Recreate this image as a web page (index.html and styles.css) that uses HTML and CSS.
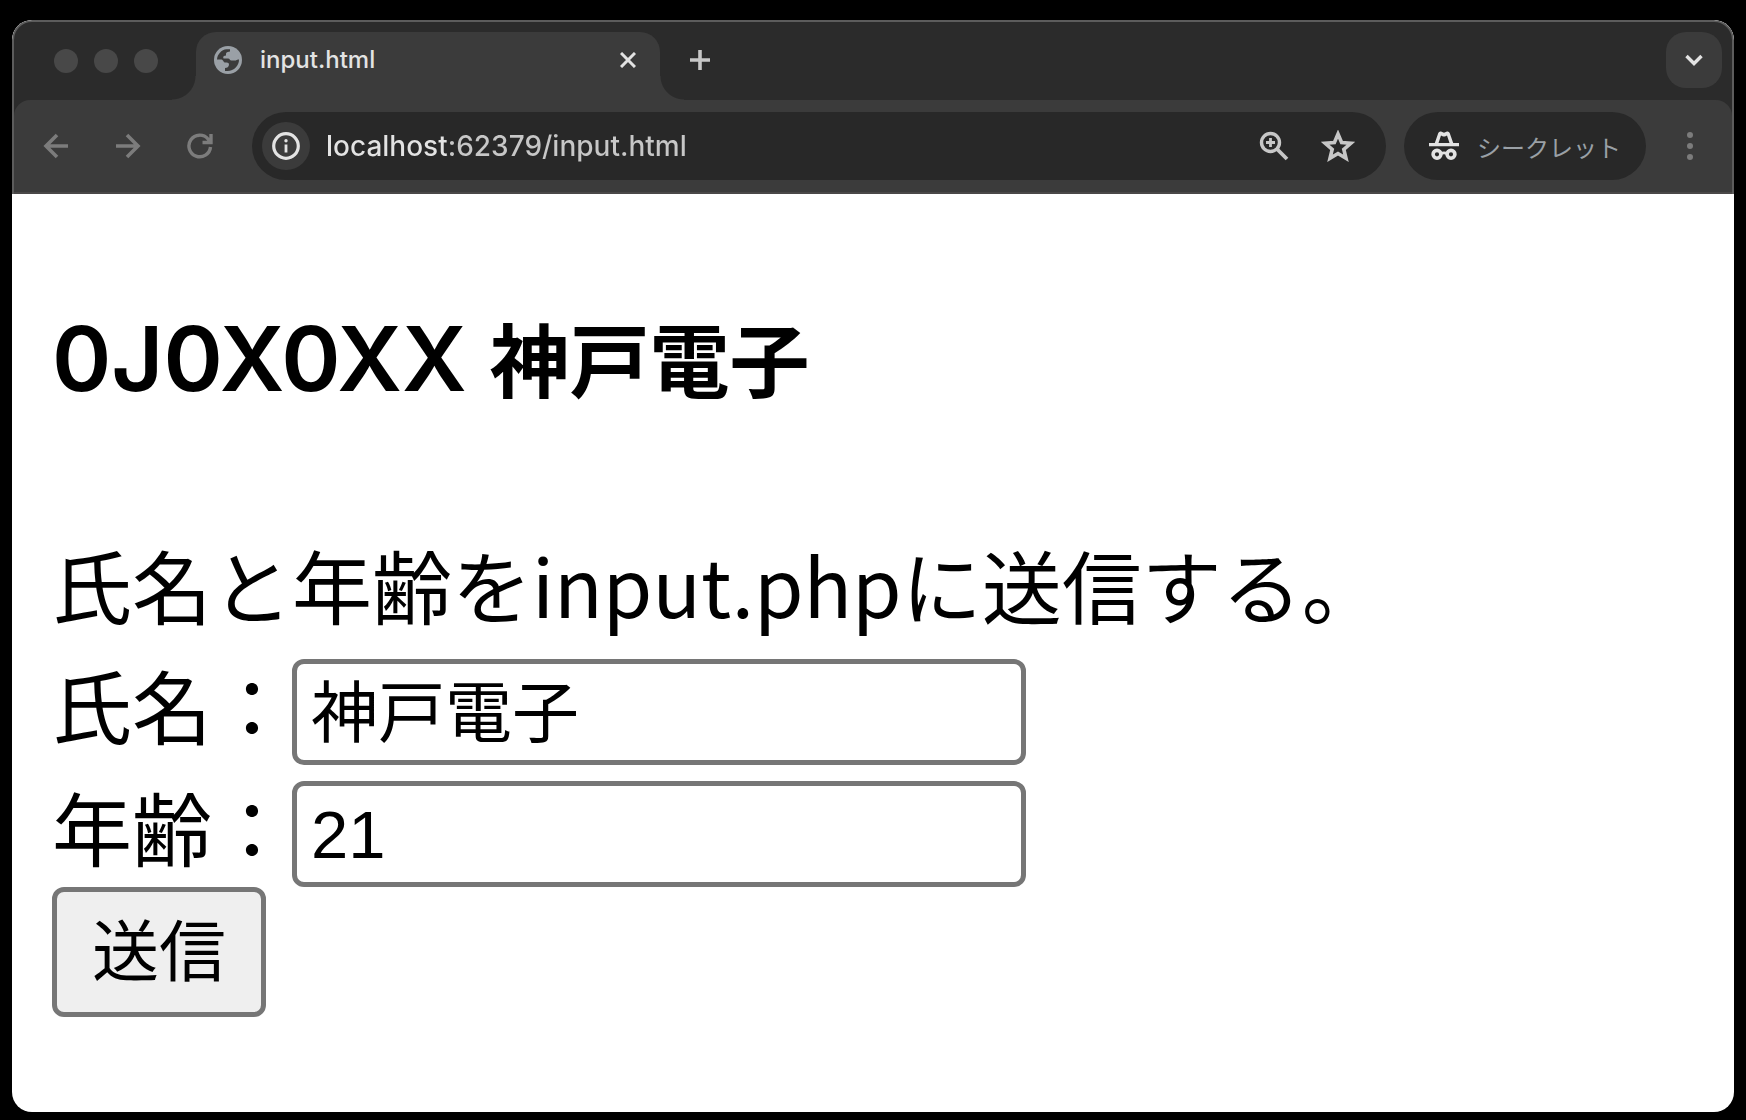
FILE: index.html
```html
<!DOCTYPE html>
<html lang="ja">
<head>
<meta charset="utf-8">
<title>input.html</title>
<link rel="stylesheet" href="styles.css">
</head>
<body>
<div class="window">
  <header class="chrome">
    <div class="tabstrip">
      <div class="lights"><span class="light"></span><span class="light"></span><span class="light"></span></div>
      <div class="tab">
        <svg class="favicon" viewBox="0 0 28 28" aria-hidden="true">
          <circle cx="14" cy="14" r="14" fill="#9aa0a6"/>
          <path fill="#3b3b3b" d="M3 13.5C3.2 8.5 7.500 3.500 12.500 3.200L16 3.200V5.500C14.500 6 12.500 5.500 12 7.500V9.500C10 9.500 8.500 10.500 9.500 12.500H14C16 12.500 15.500 14.500 17.500 14.500H21C22.500 14.500 23 13 25 13.500C25.200 19.500 20 25 13.500 25H11V22C13 22 15 21 15 18.500C15 16.500 13 16.500 11 16.500C9.500 16.500 9.500 14 7.500 13.500Z"/>
        </svg>
        <span class="tab-title">input.html</span>
        <button class="icon-button close" type="button" aria-label="タブを閉じる">
          <svg width="16" height="16" viewBox="0 0 16 16"><path d="M1 1L15 15M15 1L1 15" fill="none" stroke="#e3e3e3" stroke-width="3"/></svg>
        </button>
      </div>
      <button class="icon-button new-tab" type="button" aria-label="新しいタブ">
        <svg width="20" height="20" viewBox="0 0 20 20"><path d="M10 0V20M0 10H20" fill="none" stroke="#c7c7c7" stroke-width="3.600"/></svg>
      </button>
      <button class="icon-button tab-search" type="button" aria-label="タブを検索">
        <svg width="18" height="12" viewBox="0 0 18 12"><path d="M1.500 2L9 9.500L16.500 2" fill="none" stroke="#e3e3e3" stroke-width="3.400"/></svg>
      </button>
    </div>
    <div class="toolbar">
      <nav class="nav">
        <button class="icon-button nav-button" type="button" aria-label="戻る">
          <svg width="26" height="26" viewBox="0 0 26 26"><path d="M25 13H3M14 2L3 13L14 24" fill="none" stroke="#7c7c7c" stroke-width="3.600"/></svg>
        </button>
        <button class="icon-button nav-button" type="button" aria-label="進む">
          <svg width="26" height="26" viewBox="0 0 26 26"><path d="M1 13H23M12 2L23 13L12 24" fill="none" stroke="#7c7c7c" stroke-width="3.600"/></svg>
        </button>
        <button class="icon-button nav-button" type="button" aria-label="再読み込み">
          <svg width="26" height="26" viewBox="0 0 26 26"><path d="M23.500 14A10.800 10.800 0 1 1 21 6L23 8.500M24 1V9.500H15.500" fill="none" stroke="#7c7c7c" stroke-width="3.400"/></svg>
        </button>
      </nav>
      <div class="omnibox">
        <button class="icon-button site-info" type="button" aria-label="サイト情報">
          <svg width="28" height="28" viewBox="0 0 28 28"><circle cx="14" cy="14" r="12.300" fill="none" stroke="#e3e3e3" stroke-width="3.200"/><path d="M14 12.500V20.500" stroke="#e3e3e3" stroke-width="2.800"/><circle cx="14" cy="8.800" r="1.700" fill="#e3e3e3"/></svg>
        </button>
        <input class="url" type="text" aria-label="アドレス" value="localhost:62379/input.html">
        <button class="icon-button omni-action" type="button" aria-label="ズーム">
          <svg width="30" height="30" viewBox="0 0 30 30"><g fill="none" stroke="#c7c7c7"><circle cx="11.500" cy="11.500" r="9" stroke-width="3.400"/><path d="M18 18L28 28" stroke-width="3.800"/><path d="M11.500 7V16M7 11.500H16" stroke-width="2.800"/></g></svg>
        </button>
        <button class="icon-button omni-action" type="button" aria-label="ブックマーク">
          <svg width="34" height="32" viewBox="0 0 34 32"><path d="M17 4L20.600 12.500L29.800 13.300L22.800 19.300L25 28.300L17 23.500L9 28.300L11.200 19.300L4.200 13.300L13.400 12.500Z" fill="none" stroke="#c7c7c7" stroke-width="3.600"/></svg>
        </button>
      </div>
      <button class="incognito" type="button">
        <svg width="30" height="30" viewBox="0 0 30 30"><path fill="#e3e3e3" d="M0 12H5.800L9.300 2Q10.100 0 12 .5L15 1.700L18 .5Q19.900 0 20.700 2L24.200 12H30V15.300H0Z"/><path fill="#282828" d="M9.500 12L12 4.600L14 5.500H16L18 4.600L20.500 12Z"/><g fill="none" stroke="#e3e3e3" stroke-width="3.600"><circle cx="8" cy="23.300" r="3.900"/><circle cx="22" cy="23.300" r="3.900"/></g><path d="M11.500 22.800Q15 20.800 18.500 22.800" fill="none" stroke="#e3e3e3" stroke-width="2.800"/></svg>
        <span>シークレット</span>
      </button>
      <button class="icon-button nav-button" type="button" aria-label="メニュー">
        <svg width="6" height="30" viewBox="0 0 6 30" fill="#7c7c7c"><circle cx="3" cy="4" r="3"/><circle cx="3" cy="15" r="3"/><circle cx="3" cy="26" r="3"/></svg>
      </button>
    </div>
  </header>
  <main class="page">
    <h4 class="heading"><span class="student-id">0J0X0XX </span>神戸電子</h4>
    <form class="form">
      <p class="lead">氏名と年齢をinput.phpに送信する。</p>
      <div class="row"><label for="name">氏名：</label><input class="field field-name" id="name" name="name" type="text" value="神戸電子"></div>
      <div class="row"><label for="age">年齢：</label><input class="field" id="age" name="age" type="text" value="21"></div>
      <button class="submit" type="button">送信</button>
    </form>
  </main>
</div>
</body>
</html>
```

FILE: styles.css
```css
* {
  box-sizing: border-box;
}

body {
  margin: 0;
  padding: 20px 12px 8px;
  background: #000;
  font-family: Inter, "Noto Sans CJK JP", sans-serif;
}

button,
input {
  margin: 0;
  font-family: inherit;
}

.window {
  display: flex;
  flex-direction: column;
  min-height: calc(100vh - 28px);
  border-radius: 20px;
  background: #fff;
  overflow: hidden;
}

.chrome {
  border: 2px solid #5c5c5c;
  border-bottom: 0;
  border-radius: 20px 20px 0 0;
  background: #2b2b2b;
}

.icon-button {
  display: flex;
  align-items: center;
  justify-content: center;
  flex: none;
  padding: 0;
  border: 0;
  background: none;
}

/* Tab strip */
.tabstrip {
  display: flex;
  height: 78px;
  padding: 10px 10px 0 40px;
}

.lights {
  display: flex;
  align-items: center;
  gap: 16px;
  height: 58px;
}

.light {
  width: 24px;
  height: 24px;
  border-radius: 50%;
  background: #484848;
}

.tab {
  position: relative;
  display: flex;
  align-items: center;
  gap: 18px;
  width: 464px;
  margin-left: 38px;
  padding: 0 16px 12px 18px;
  border-radius: 20px 20px 0 0;
  background: #3b3b3b;
}

.tab::before,
.tab::after {
  content: "";
  position: absolute;
  bottom: 0;
  width: 24px;
  height: 24px;
}

.tab::before {
  right: 100%;
  background: radial-gradient(circle at 0 0, transparent 23px, #3b3b3b 24px);
}

.tab::after {
  left: 100%;
  background: radial-gradient(circle at 100% 0, transparent 23px, #3b3b3b 24px);
}

.favicon {
  flex: none;
  width: 28px;
  height: 28px;
}

.tab-title {
  flex: 1;
  color: #e3e3e3;
  font-size: 24px;
  font-weight: 450;
  line-height: 32px;
}

.close {
  width: 32px;
  height: 32px;
}

.new-tab {
  width: 56px;
  height: 56px;
  margin-left: 12px;
}

.tab-search {
  width: 56px;
  height: 56px;
  margin-left: auto;
  border-radius: 20px;
  background: #3b3b3b;
}

/* Toolbar */
.toolbar {
  display: flex;
  align-items: center;
  height: 94px;
  padding: 0 26px;
  border-bottom: 2px solid #4a4848;
  border-radius: 16px 16px 0 0;
  background: #3b3b3b;
}

.nav {
  display: flex;
  gap: 40px;
}

.nav-button {
  width: 32px;
  height: 32px;
}

.omnibox {
  display: flex;
  flex: 1;
  align-items: center;
  min-width: 0;
  height: 68px;
  margin: 0 18px 0 36px;
  padding: 0 24px 0 10px;
  border-radius: 34px;
  background: #282828;
}

.site-info {
  width: 48px;
  height: 48px;
  border-radius: 50%;
  background: #3b3b3b;
}

.url {
  flex: 1;
  min-width: 0;
  padding: 0 0 0 16px;
  border: 0;
  outline: 0;
  background: linear-gradient(90deg, #e3e3e3 136px, #c7c7c7 136px);
  background-clip: text;
  color: transparent;
  font-size: 28px;
  font-weight: 450;
  line-height: 40px;
}

.omni-action {
  width: 48px;
  height: 48px;
}

.omni-action + .omni-action {
  margin-left: 16px;
}

.incognito {
  display: flex;
  align-items: center;
  gap: 18px;
  height: 68px;
  margin-right: 28px;
  padding: 0 25px;
  border: 0;
  border-radius: 34px;
  background: #282828;
  color: #9aa0a6;
  font-size: 24px;
  white-space: nowrap;
}

/* Page shown in the window */
.page {
  flex: 1;
  padding: 102px 40px 40px;
  color: #000;
  font-family: "Noto Sans CJK JP", sans-serif;
  font-size: 80px;
  line-height: 120px;
}

.heading {
  margin: 0 0 107px;
  font-size: 80px;
  font-weight: 700;
}

.student-id {
  font-family: Inter, sans-serif;
  font-size: 90px;
  font-weight: 600;
  line-height: 1;
}

.lead {
  margin: 0;
}

.row {
  display: flex;
  align-items: flex-end;
  height: 122px;
}

.row label {
  align-self: flex-start;
}

.field {
  width: 734px;
  height: 106px;
  padding: 6px 14px 5px;
  border: 5px solid #767676;
  border-radius: 12px;
  background: #fff;
  color: #000;
  font-family: "Liberation Sans", "Noto Sans CJK JP", sans-serif;
  font-size: 67px;
}

.field-name {
  padding-bottom: 15px;
}

.submit {
  display: block;
  padding: 5px 35px 15px;
  border: 5px solid #767676;
  border-radius: 12px;
  background: #efefef;
  color: #000;
  font-family: "Noto Sans CJK JP", sans-serif;
  font-size: 67px;
  line-height: 100px;
}
```
